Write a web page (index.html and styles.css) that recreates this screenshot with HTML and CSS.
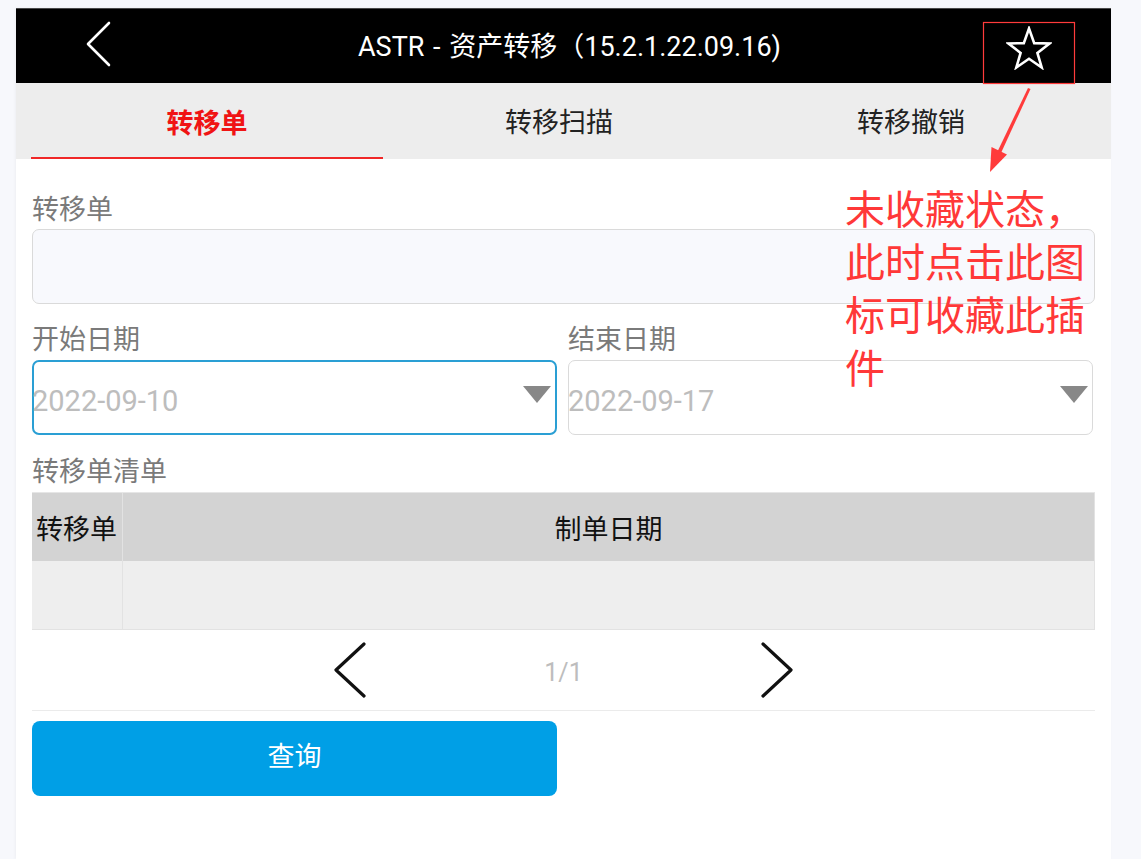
FILE: index.html
```html
<!DOCTYPE html>
<html lang="zh-CN">
<head>
<meta charset="utf-8">
<title>ASTR - 资产转移</title>
<link rel="stylesheet" href="styles.css">
</head>
<body>
<div class="phone">
  <header class="topbar">
    <div class="back">
      <svg width="30" height="48" viewBox="0 0 30 48"><polyline points="25,3 4,24 25,45" fill="none" stroke="#fff" stroke-width="2.6" stroke-linecap="round" stroke-linejoin="round"/></svg>
    </div>
    <div class="title">ASTR - 资产转移（15.2.1.22.09.16)</div>
    <div class="fav">
      <svg width="46" height="44" viewBox="0 0 46 44"><polygon points="23,2.5 28.2,17.1 43.5,17.5 31.4,26.9 35.7,41.5 23,32.8 10.3,41.5 14.6,26.9 2.5,17.5 17.8,17.1" fill="none" stroke="#fff" stroke-width="2.6" stroke-linejoin="miter"/></svg>
    </div>
  </header>
  <nav class="tabs">
    <div class="tab active">转移单</div>
    <div class="tab">转移扫描</div>
    <div class="tab">转移撤销</div>
  </nav>
  <main class="content">
    <div class="label">转移单</div>
    <div class="input plain"></div>
    <div class="dates">
      <div class="field">
        <div class="label">开始日期</div>
        <div class="input date focus"><span class="val">2022-09-10</span><i class="caret"></i></div>
      </div>
      <div class="field">
        <div class="label">结束日期</div>
        <div class="input date"><span class="val">2022-09-17</span><i class="caret"></i></div>
      </div>
    </div>
    <div class="label list-label">转移单清单</div>
    <div class="table">
      <div class="row head">
        <div class="c1">转移单</div>
        <div class="c2">制单日期</div>
      </div>
      <div class="row body">
        <div class="c1"></div>
        <div class="c2"></div>
      </div>
    </div>
    <div class="pager">
      <svg width="32" height="56" viewBox="0 0 32 56"><polyline points="30,2 2,28 30,54" fill="none" stroke="#111" stroke-width="3.2" stroke-linecap="round" stroke-linejoin="round"/></svg>
      <div class="pageno">1/1</div>
      <svg width="32" height="56" viewBox="0 0 32 56"><polyline points="2,2 30,28 2,54" fill="none" stroke="#111" stroke-width="3.2" stroke-linecap="round" stroke-linejoin="round"/></svg>
    </div>
    <div class="actions">
      <button class="btn">查询</button>
    </div>
  </main>
</div>
<div class="note">未收藏状态，<br>此时点击此图<br>标可收藏此插<br>件</div>
<svg class="overlay" width="1141" height="859" viewBox="0 0 1141 859">
  <rect x="983.5" y="22.5" width="91" height="61" fill="none" stroke="#ff3b3b" stroke-width="1.2"/>
  <polygon points="1028,88 1030.5,89 1001,153 997.5,151.5" fill="#ff3b3b"/>
  <polygon points="990,172 991.5,147 1007,154.5" fill="#ff3b3b"/>
</svg>
</body>
</html>
```

FILE: styles.css
```css
html, body {
  margin: 0;
  padding: 0;
}
body {
  background: #f7f8fc;
  font-family: "Noto Sans CJK SC", "Noto Sans", sans-serif;
  width: 1141px;
  height: 859px;
  overflow: hidden;
  position: relative;
}
.phone {
  margin: 8px 0 0 16px;
  width: 1095px;
  height: 851px;
  background: #fff;
  box-shadow: -1px 0 3px rgba(0,0,0,0.04);
}
.topbar {
  height: 75px;
  background: #000;
  border-top: 1px solid #4a4a4a;
  box-sizing: border-box;
  display: flex;
  align-items: center;
}
.back {
  width: 30px;
  margin-left: 68px;
  display: flex;
  align-items: center;
  margin-top: -4px;
}
.title {
  flex: 1;
  text-align: center;
  color: #fff;
  font-family: Roboto, "Noto Sans CJK SC", sans-serif;
  font-size: 27px;
  padding-left: 42px;
  margin-top: -4px;
  word-spacing: 2px;
}
.fav {
  width: 91px;
  height: 61px;
  margin-right: 37px;
  align-self: flex-end;
  display: flex;
  align-items: center;
  justify-content: center;
  padding-bottom: 10px;
  box-sizing: border-box;
}
.tabs {
  height: 76px;
  background: #ededed;
  display: flex;
  padding: 0 24px 0 15px;
}
.tab {
  flex: 1;
  text-align: center;
  font-size: 27px;
  color: #222;
  line-height: 76px;
  box-sizing: border-box;
}
.tab.active {
  color: #f01414;
  font-weight: bold;
  border-bottom: 2px solid #f02828;
  line-height: 78px;
}
.content {
  padding: 31px 16px 0 16px;
}
.label {
  font-size: 27px;
  color: #7a7a7a;
  line-height: 36px;
  margin-bottom: 3px;
}
.input {
  height: 75px;
  box-sizing: border-box;
  border: 1px solid #dadada;
  border-radius: 7px;
}
.input.plain {
  background: #f8f9fd;
}
.dates {
  display: grid;
  grid-template-columns: 525px 525px;
  column-gap: 11px;
  margin-top: 16px;
}
.dates .label {
  margin-bottom: 4px;
}
.input.date {
  display: flex;
  align-items: center;
  justify-content: space-between;
  padding: 3px 4px 0 0;
  font-family: Roboto, "Noto Sans CJK SC", sans-serif;
  font-size: 29px;
  color: #bdbdbd;
}
.input .val {
  margin-left: -1px;
  padding-top: 4px;
}
.input.focus .val {
  margin-left: -2px;
}
.input.focus {
  border: 2px solid #2a9fd4;
}
.caret {
  width: 0;
  height: 0;
  border-left: 14px solid transparent;
  border-right: 14px solid transparent;
  border-top: 17px solid #888;
  margin-top: -10px;
}
.list-label {
  margin-top: 17px;
  margin-bottom: 4px;
}
.table {
  width: 1063px;
}
.row {
  display: flex;
  height: 69px;
}
.row .c1 {
  width: 91px;
  border-right: 1px solid #e2e2e2;
  box-sizing: border-box;
}
.row .c2 {
  flex: 1;
  border-right: 1px solid #e2e2e2;
}
.row.head {
  background: #d3d3d3;
  font-size: 27px;
  color: #111;
  line-height: 69px;
  border-top: 1px solid #e6e6e6;
  box-sizing: border-box;
}
.row.head .c1 {
  padding-left: 4px;
}
.row.head .c2 {
  text-align: center;
}
.row.body {
  background: #eeeeee;
  border-bottom: 1px solid #e2e2e2;
  box-sizing: border-box;
}
.pager {
  height: 80px;
  border-bottom: 1px solid #ebebeb;
  display: flex;
  align-items: center;
  justify-content: center;
}
.pageno {
  width: 395px;
  text-align: center;
  font-family: Roboto, "Noto Sans CJK SC", sans-serif;
  font-size: 25px;
  color: #bdbdbd;
  padding-top: 5px;
}
.actions {
  padding-top: 10px;
}
.btn {
  width: 525px;
  height: 75px;
  border: none;
  border-radius: 8px;
  background: #009fe6;
  color: #fff;
  font-family: "Noto Sans CJK SC", "Noto Sans", sans-serif;
  font-size: 27px;
  padding: 0 0 8px 0;
}
.note {
  position: absolute;
  left: 845px;
  top: 181px;
  font-size: 40px;
  line-height: 53px;
  color: #ff3838;
  white-space: nowrap;
}
.overlay {
  position: absolute;
  left: 0;
  top: 0;
  pointer-events: none;
}
```
